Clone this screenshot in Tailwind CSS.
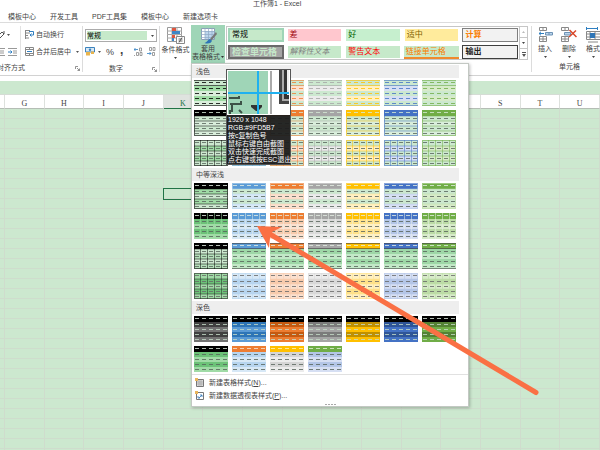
<!DOCTYPE html>
<html lang="zh-CN">
<head>
  <meta charset="UTF-8" />
  <meta name="viewport" content="width=device-width, initial-scale=1.0" />
  <title>工作簿1 - Excel</title>
  <script src="https://cdn.jsdelivr.net/npm/@tailwindcss/browser@4"></script>
</head>
<body class="relative h-screen overflow-hidden bg-white text-[#444] text-[7px] leading-[10px] font-['Liberation_Sans','Noto_Sans_CJK_SC',sans-serif]">

  <!-- Title and tabs -->
  <header class="h-[23px] flex flex-col border-b border-[#dcdcdc]">
    <h1 class="h-[12px] pl-[253px] leading-[8px]">工作簿1 - Excel</h1>
    <nav class="flex gap-[14px] pl-2">
      <a href="#">模板中心</a>
      <a href="#">开发工具</a>
      <a href="#">PDF工具集</a>
      <a href="#">模板中心</a>
      <a href="#">新建选项卡</a>
    </nav>
  </header>

  <!-- Ribbon -->
  <section class="h-[53px] flex border-b border-[#d2d2d2] py-[3px]">
    <div class="w-[83px] shrink-0 flex flex-col border-r border-[#dcdcdc]">
      <div class="flex h-[36px]">
        <div class="w-[21px] flex flex-col border-r border-[#e2e2e2]">
          <button class="h-[17px] flex items-center gap-[2px]" aria-label="方向">
            <svg class="w-[5px] h-[10px]" viewBox="0 0 5 10" fill="none" stroke="#555"><path d="M0 8L4 4L2 2L0 4M4 1V4" /></svg>
            <svg class="w-[3px] h-[2px]" viewBox="0 0 3 2"><path d="M0 0H3L1.5 2z" fill="#555" /></svg>
          </button>
          <button class="h-[17px] flex items-center gap-[3px]" aria-label="增加缩进量">
            <svg class="w-[5px] h-[8px]" viewBox="0 0 5 8" stroke="#999"><path d="M0 .5H5M0 3H4M0 5H4M0 7.5H5" /></svg>
            <svg class="w-[9px] h-[8px]" viewBox="0 0 9 8" stroke="#999" fill="none"><path d="M0 .5H9M5 3H9M5 5H9M0 7.5H9" /><path d="M0 4H4M2.5 2.5L4 4L2.5 5.5" stroke="#2f7fc1" /></svg>
          </button>
        </div>
        <div class="flex flex-col pl-1">
          <button class="h-[17px] flex items-center gap-[2px]">
            <svg class="w-[9px] h-[9px]" viewBox="0 0 9 9" fill="none" stroke="#888"><path d="M0 .5H5M0 3H5M0 5.5H3M0 8H4M.5 0V9" /><path d="M4 1.5H8.500V5H5M6.500 3.500L5 5L6.500 6.500" stroke="#2f7fc1" /></svg>
            自动换行
          </button>
          <button class="h-[17px] flex items-center gap-[2px]">
            <svg class="w-[9px] h-[9px]" viewBox="0 0 9 9" fill="none" stroke="#888"><path d="M.5 .5H8.500V8.500H.5zM0 2.500H9M0 6.500H9M4.500 0V2.500M4.500 6.500V9" /><path d="M2 4.500H7" stroke="#2f7fc1" /></svg>
            合并后居中
            <svg class="w-[3px] h-[2px] ml-[3px]" viewBox="0 0 3 2"><path d="M0 0H3L1.5 2z" fill="#555" /></svg>
          </button>
        </div>
      </div>
      <div class="flex justify-between items-center pr-[2px] pt-[3px]">
        <span class="-ml-[3px]">对齐方式</span>
        <svg class="w-[5px] h-[5px]" viewBox="0 0 5 5" fill="none" stroke="#777" stroke-width=".8"><path d="M.5 3V.5H3M2 2L4.500 4.500M4.500 2.500V4.500H2.500" /></svg>
      </div>
    </div>

    <div class="w-[77px] shrink-0 flex flex-col border-r border-[#dcdcdc] px-[2px]">
      <div class="h-[36px] pt-[3px]">
        <div class="relative h-[13px] border border-[#ababab] pr-[8px]">
          <select aria-label="数字格式" class="block w-full h-full appearance-none bg-[#c6e9ca] border border-white pl-0 text-[7px] leading-[9px] text-black">
            <option>常规</option>
          </select>
          <svg class="absolute right-[2px] top-[5px] w-[3px] h-[2px]" viewBox="0 0 3 2"><path d="M0 0H3L1.5 2z" fill="#444" /></svg>
        </div>
        <div class="flex items-center h-[19px]">
          <button class="flex items-center gap-[3px]" aria-label="会计数字格式">
            <svg class="w-[10px] h-[9px]" viewBox="0 0 10 9"><path d="M.5 .5H9.500V5H.5z" fill="#d9e8f5" stroke="#3b83bd" /><circle cx="5" cy="2.800" r="1.200" fill="#3b83bd" /><path d="M1 5H5V8.500H1zM6 4.500H9V7H6z" fill="#e9b44c" /></svg>
            <svg class="w-[3px] h-[2px]" viewBox="0 0 3 2"><path d="M0 0H3L1.5 2z" fill="#555" /></svg>
          </button>
          <button class="ml-[5px] text-[9px]">%</button>
          <button class="ml-[6px] pb-1 text-[12px] font-bold">,</button>
          <button class="ml-[11px]" aria-label="增加小数位数">
            <svg class="w-[9px] h-[9px]" viewBox="0 0 9 9" fill="none" stroke="#888" stroke-width=".8"><path d="M0 2.500H4M1.500 1L0 2.500L1.500 4" stroke="#2f7fc1" /><path d="M5.500 1H7.500V4H5.500zM2.500 5.500H4.500V8.500H2.500zM6 5.500H8V8.500H6zM.5 8V9" /></svg>
          </button>
          <button class="ml-[4px]" aria-label="减少小数位数">
            <svg class="w-[9px] h-[9px]" viewBox="0 0 9 9" fill="none" stroke="#888" stroke-width=".8"><path d="M0 6.500H4M2.500 5L4 6.500L2.500 8" stroke="#2f7fc1" /><path d="M2.500 .5H4.500V3.500H2.500zM6 .5H8V3.500H6zM5.500 5.500H7.500V8.500H5.500z" /></svg>
          </button>
        </div>
      </div>
      <div class="flex justify-end items-center pt-[3px]">
        <span class="mr-[29px]">数字</span>
        <svg class="w-[5px] h-[5px]" viewBox="0 0 5 5" fill="none" stroke="#777" stroke-width=".8"><path d="M.5 3V.5H3M2 2L4.500 4.500M4.500 2.500V4.500H2.500" /></svg>
      </div>
    </div>

    <div class="w-[372px] shrink-0 flex border-r border-[#dcdcdc]">
      <button class="w-[31px] h-[36px] shrink-0 flex flex-col items-center pt-[1px] whitespace-nowrap">
        <svg class="w-[18px] h-[17px] shrink-0" viewBox="0 0 18 17"><path d="M.5 .5H14.500V14.500H.5z" fill="#fff" stroke="#999" /><path d="M5 0V15M10 0V15M0 4H15M0 7.500H15M0 11H15" stroke="#aaa" fill="none" /><path d="M5 1H9V4H5zM5 8H8V11H5z" fill="#e0563f" /><path d="M5 4H13V7H5zM5 11H7V14H5z" fill="#3f86c6" /><path d="M9.500 9.500H17.500V16.500H9.500z" fill="#fff" stroke="#888" /><path d="M11.500 12H15.500M11.500 14H15.500M15 10.500L12 15.500" stroke="#444" fill="none" stroke-width=".8" /></svg>
        <span class="leading-[12px]">条件格式</span>
        <svg class="w-[3px] h-[2px] shrink-0 mt-[1px]" viewBox="0 0 3 2"><path d="M0 0H3L1.5 2z" fill="#444" /></svg>
      </button>
      <button class="w-[34px] h-[38px] shrink-0 -mt-[1px] bg-[#9fd5b7] flex flex-col items-center pt-[3px] whitespace-nowrap leading-[8px]">
        <svg class="w-[17px] h-[17px] shrink-0" viewBox="0 0 17 17"><path d="M1.500 .5H14.500V11.500H1.500z" fill="#fff" stroke="#8d9fb5" /><path d="M5 3H14V11H5z" fill="#bcd5ec" /><path d="M1 3.500H15M1 6.500H15M1 9.500H15M5 0V12M8.500 0V12M12 0V12" stroke="#8fa9c6" stroke-width=".7" fill="none" /><path d="M16 4L10 11L11.500 12.500L17 6z" fill="#777" /><path d="M10 11C8 11 7.500 14 4.500 15C8 16.500 12 15 11.800 12.500z" fill="#2e75b6" /></svg>
        <span>套用</span>
        <span class="flex items-center gap-[1px]">表格格式
          <svg class="w-[3px] h-[2px]" viewBox="0 0 3 2"><path d="M0 0H3L1.5 2z" fill="#333" /></svg>
        </span>
      </button>
      <div class="ml-[1px] flex w-[302px] h-[34px] border border-[#c6c6c6]">
        <div class="grid grid-cols-5 gap-x-[3px] gap-y-[3px] w-[292px] shrink-0 p-[1px] text-[8px] leading-[10px] *:text-left *:whitespace-nowrap *:pl-[2px] *:h-[14px] *:overflow-hidden">
          <button class="bg-[#c6e9ca] border-2 border-[#9fd5b7] text-black">常规</button>
          <button class="bg-[#ffc7ce] border border-white text-[#9c0006]">差</button>
          <button class="bg-[#c6efce] border border-white text-[#006100]">好</button>
          <button class="bg-[#ffeb9c] border border-white text-[#7f6000]">适中</button>
          <button class="bg-[#f2f2f2] border border-[#7f7f7f] text-[#fa7d00] font-bold">计算</button>
          <button class="bg-[#a5a5a5] border-2 border-[#6a6a6a] text-[#c6e9ca] text-[9px] font-bold">检查单元格</button>
          <button class="bg-[#c6e9ca] border border-white text-[#7f7f7f] italic">解释性文本</button>
          <button class="bg-[#c6e9ca] border border-white text-[#ff0000]">警告文本</button>
          <button class="bg-[#c6e9ca] border-t border-t-white border-b-2 border-b-[#f08a2c] text-[#fa7d00]">链接单元格</button>
          <button class="bg-[#f2f2f2] border border-[#3f3f3f] text-[#222] font-bold">输出</button>
        </div>
        <div class="flex-1 flex flex-col border-l border-[#c6c6c6] divide-y divide-[#c6c6c6]">
          <button class="flex-1 flex items-center justify-center" aria-label="上一行"><svg class="w-[3px] h-[2px]" viewBox="0 0 3 2"><path d="M0 2H3L1.5 0z" fill="#bbb" /></svg></button>
          <button class="flex-1 flex items-center justify-center" aria-label="下一行"><svg class="w-[3px] h-[2px]" viewBox="0 0 3 2"><path d="M0 0H3L1.5 2z" fill="#444" /></svg></button>
          <button class="flex-1 flex items-center justify-center" aria-label="其他"><svg class="w-[4px] h-[5px]" viewBox="0 0 4 5"><path d="M0 0H4V1H0zM0 2H4L2 5z" fill="#555" /></svg></button>
        </div>
      </div>
    </div>

    <div class="w-[76px] shrink-0 flex flex-col">
      <div class="flex h-[36px] gap-[8px] pl-[5px] pt-[1px] *:flex *:flex-col *:items-center *:whitespace-nowrap *:w-[16px] *:shrink-0">
        <button>
          <svg class="w-[15px] h-[16px] shrink-0" viewBox="0 0 15 16" fill="none" stroke="#888"><path d="M1.500 .5H8.500V3.500H1.500zM5 0V4M1.500 9.500H8.500V14.500H1.500zM5 9V15M1 12H9" /><path d="M7.500 5.500H14.500V8H7.500zM11 5V8" fill="#bcd5ec" stroke="#6d92b5" /><path d="M1 6.500H6M3 4.800L1 6.500L3 8.300" stroke="#2f7fc1" /></svg>
          <span class="leading-[12px]">插入</span>
          <svg class="w-[3px] h-[2px] shrink-0 mt-[1px]" viewBox="0 0 3 2"><path d="M0 0H3L1.5 2z" fill="#444" /></svg>
        </button>
        <button>
          <svg class="w-[16px] h-[16px] shrink-0" viewBox="0 0 16 16" fill="none" stroke="#888"><path d="M.5 .5H7.500V3.500H.5zM4 0V4M.5 9.500H7.500V14.500H.5zM4 9V15M0 12H8" /><path d="M3.500 5.500H9.500V8H3.500z" fill="#bcd5ec" stroke="#6d92b5" /><path d="M8.500 3L15.500 10M15 3.500L8 10" stroke="#d9482b" stroke-width="1.500" /></svg>
          <span class="leading-[12px]">删除</span>
          <svg class="w-[3px] h-[2px] shrink-0 mt-[1px]" viewBox="0 0 3 2"><path d="M0 0H3L1.5 2z" fill="#444" /></svg>
        </button>
        <button>
          <svg class="w-[16px] h-[16px] shrink-0" viewBox="0 0 16 16" fill="none" stroke="#888"><path d="M1 1.500H13M1.500 0V3M12.500 0V3" stroke="#2f7fc1" /><path d="M1.500 4.500H15.500V12.500H1.500zM1 7H16M1 10H16M5 4V13M10 4V13M3 15H13" /><path d="M5 6H10V11H5z" fill="#2e75b6" stroke="none" /></svg>
          <span class="leading-[12px]">格式</span>
          <svg class="w-[3px] h-[2px] shrink-0 mt-[1px]" viewBox="0 0 3 2"><path d="M0 0H3L1.5 2z" fill="#444" /></svg>
        </button>
      </div>
      <span class="pt-[3px] pl-[27px]">单元格</span>
    </div>
  </section>

  <!-- Formula bar -->
  <div class="mt-[5px] h-[14px] bg-[#cce8cf] border-b border-[#d5dcd5]"></div>

  <!-- Sheet -->
  <table class="w-full table-fixed border-separate border-spacing-0 font-['Liberation_Serif',serif]">
    <colgroup id="cols"></colgroup>
    <thead><tr id="letters"></tr></thead>
    <tbody id="cells" class="bg-[#cce8cf]"></tbody>
  </table>

  <!-- Table style menu -->
  <div class="absolute left-[191px] top-[63px] w-[278px] bg-white border border-[#c3c8c3] shadow-[1px_1px_3px_rgba(0,0,0,0.25)]">
    <div id="styles" class="pt-[1px]"></div>
    <div class="border-t border-[#e1e1e1] pt-[1px] pl-[3px] flex flex-col items-start">
      <button class="h-[13px] flex items-center gap-[5px]">
        <svg class="w-[9px] h-[9px]" viewBox="0 0 9 9"><path d="M1.500 1.500H8.500V8.500H1.500z" fill="#ddd" stroke="#777" /><path d="M2 4H8M2 6H8M4 2V8M6 2V8" stroke="#999" stroke-width=".6" /><path d="M0 0H3V3H0z" fill="#eab65c" /></svg>
        <span>新建表格样式(<u>N</u>)...</span>
      </button>
      <button class="h-[13px] flex items-center gap-[5px]">
        <svg class="w-[9px] h-[9px]" viewBox="0 0 9 9" fill="none"><path d="M1.500 1.500H8.500V8.500H1.500z" fill="#fff" stroke="#777" /><path d="M4 7L7 4M7 6V4H5M3 5V7H5" stroke="#2e75b6" stroke-width=".8" /><path d="M0 0H3V3H0z" fill="#eab65c" /></svg>
        <span>新建数据透视表样式(<u>P</u>)...</span>
      </button>
    </div>
    <div class="h-[4px] flex justify-center items-center gap-[1px] *:w-[2px] *:h-[1px] *:bg-[#aaa]"><i></i><i></i><i></i><i></i></div>
  </div>

  <!-- Colour picker tooltip -->
  <div class="absolute left-[226px] top-[69px] w-[65px] h-[96px] border border-[#555] bg-[#1c1c1c]/95 text-white whitespace-nowrap">
    <svg class="block w-full h-[45px]" viewBox="0 0 63 45" preserveAspectRatio="none">
      <path d="M0 0H63V45H0z" fill="#fff" />
      <path d="M1 1H41V44H1z" fill="#9fd5b7" />
      <path d="M43 1H45V44H43z" fill="#aaa" />
      <path d="M52 0H62V34H52z" fill="#444" /><path d="M55 0H62V31H55z" fill="#aaa" /><path d="M57 0H62V29H57z" fill="#333" /><path d="M60 0H62V25H60z" fill="#eee" />
      <path d="M2 28H12V26M3 34H14V31M5 35V41H3V44M12 40L15 43" fill="none" stroke="#3c5247" stroke-width="2" />
      <path d="M24 35H35V37L31 41H29L24 37z" fill="#333" />
      <path d="M30 1H32V44H30zM1 22H62V24H1z" fill="#1fb1f0" />
    </svg>
    <div class="pl-[1px] pt-[1px] leading-[8px]">
      <p>1920 x 1048</p>
      <p>RGB:#9FD5B7</p>
      <p>按c复制色号</p>
      <p>鼠标右键自由截图</p>
      <p>双击快速完成截图</p>
      <p>点右键或按ESC退出</p>
    </div>
  </div>

  <!-- Arrow -->
  <svg class="absolute left-[254px] top-[222px] w-[288px] h-[176px]" viewBox="254 222 288 176" fill="#fa7044">
    <path d="M257 226L282 227L272 232L270 238L269 248z" />
    <path d="M268 233L536 392.500" stroke="#fa7044" stroke-width="5" stroke-linecap="round" />
  </svg>

  <script>
    const columns = ["", "G", "H", "I", "J", "K", "L", "M", "N", "O", "P", "Q", "R", "S", "T", "U"];

    document.getElementById("cols").innerHTML = columns
      .map((c) => c ? "<col>" : '<col class="w-[5px]">').join("");

    document.getElementById("letters").innerHTML = columns.map((c) => {
      const state = c === "K" ? "bg-[#dfe3df] border-b-[#217346] text-[#217346]" : "border-b-[#b5bdb5]";
      return `<th class="h-[14px] p-0 pt-[5px] text-[8px] leading-[8px] font-normal border-b border-r border-r-[#dde1dd] ${state}">${c}</th>`;
    }).join("");

    let rows = "";
    for (let r = 1; r <= 35; r++) {
      rows += "<tr>" + columns.map((c) => {
        const active = c === "K" && r === 9;
        return `<td class="h-[10px] p-0 ${active ? "outline outline-[#217346]" : ""} border-b border-r border-[#cfdccd]"></td>`;
      }).join("") + "</tr>";
    }
    document.getElementById("cells").innerHTML = rows;

    // black, blue, orange, gray, gold, dark blue, green
    const accent = ["#000000", "#5b9bd5", "#ed7d31", "#a5a5a5", "#ffc000", "#4472c4", "#70ad47"];
    const tint = ["#a0dba6", "#d7e8f6", "#fbe0cf", "#ebebeb", "#fff0c2", "#d6dff3", "#d7ebc9"];
    const mid = ["#6cc278", "#b7d5ef", "#f8cbad", "#d9d9d9", "#ffe28a", "#b4c6e7", "#bcdca6"];
    const dark = ["#404040", "#2e75b6", "#c55a11", "#7b7b7b", "#bf9000", "#2f5597", "#548235"];
    const body = ["#737373", "#5b9bd5", "#ed7d31", "#a5a5a5", "#ffc000", "#4472c4", "#70ad47"];
    const paper = "#cce8cf";
    const ink = "#56635a";
    const each = (fn) => accent.map((a, i) => fn(a, i));

    const groups = [
      { name: "浅色", rows: [
        each((a, i) => ({ head: paper, odd: tint[i], even: i ? paper : "#d9eedb", ends: a, headDash: a, dash: a })),
        each((a) => ({ head: a, odd: paper, even: "#d9eedb", lines: a, frame: a, headDash: "#d5e8d5", dash: ink })),
        each((a, i) => ({ head: paper, odd: tint[i], even: paper, lines: a, frame: a, cols: a, headDash: ink, dash: ink })),
      ] },
      { name: "中等深浅", rows: [
        each((a, i) => ({ head: a, odd: i ? paper : "#a0dba6", even: i ? tint[i] : paper, lines: i ? mid[i] : a, frame: i ? mid[i] : a, headDash: "#e3eee3", dash: ink })),
        each((a, i) => ({ head: a, odd: mid[i], even: tint[i], cols: i ? "#e8f0e8" : "#a0dba6", headDash: "#e3eee3", dash: ink })),
        each((a, i) => i
          ? { head: a, odd: "#9ed7a7", even: "#c2e8c7", ends: "#444", headDash: "#e3eee3", dash: ink }
          : { head: a, odd: paper, even: "#b5dfba", lines: a, frame: a, cols: a, headDash: "#e3eee3", dash: ink }),
        each((a, i) => ({ head: i ? tint[i] : "#a0dba6", odd: mid[i], even: tint[i], frame: i ? mid[i] : "#222", lines: i ? mid[i] : "#222", cols: i ? mid[i] : "#222", headDash: "#666", dash: "#666" })),
      ] },
      { name: "深色", rows: [
        each((a, i) => ({ head: "#000", odd: dark[i], even: body[i], headDash: "#dfeadf", dash: "#c5dcc8" })),
        [
          { head: "#000", odd: "#6cc278", even: "#a0dba6", headDash: "#dfeadf", dash: ink },
          { head: accent[2], odd: mid[1], even: tint[1], headDash: "#f4e6d8", dash: ink },
          { head: accent[4], odd: "#d5d5d5", even: "#ececec", headDash: "#fff0c2", dash: ink },
          { head: accent[6], odd: mid[5], even: tint[5], headDash: "#e3f0d8", dash: ink },
        ],
      ] },
    ];

    function swatch(s) {
      let out = "";
      for (let r = 0; r < 5; r++) {
        const fill = r === 0 ? s.head : r % 2 ? s.odd : s.even;
        out += `<rect y="${r ? r * 5 + 1 : 0}" width="34" height="${r ? 5 : 6}" fill="${fill}"/>`;
      }
      if (s.lines) {
        for (let r = 1; r < 5; r++) out += `<rect y="${r * 5 + 0.5}" width="34" height="1" fill="${s.lines}" opacity=".5"/>`;
      }
      if (s.cols) {
        for (let c = 1; c < 5; c++) out += `<rect x="${c * 7 - 1}" width="1" height="26" fill="${s.cols}" opacity=".5"/>`;
      }
      for (let r = 0; r < 5; r++) {
        for (let c = 0; c < 5; c++) {
          out += `<rect x="${c * 7 + 1}" y="${r * 5 + (r ? 3 : 2)}" width="4" height="1" fill="${r ? s.dash : s.headDash}" opacity=".8"/>`;
        }
      }
      if (s.frame) out += `<rect x=".5" y=".5" width="33" height="25" fill="none" stroke="${s.frame}" opacity=".6"/>`;
      if (s.ends) out += `<path d="M0 .5H34M0 5.5H34M0 25.500H34" stroke="${s.ends}" opacity=".6"/>`;
      return `<svg class="block w-[34px] h-[26px]" viewBox="0 0 34 26">${out}</svg>`;
    }

    document.getElementById("styles").innerHTML = groups.map((g) => `
      <h2 class="mr-[9px] h-[13px] pl-1 leading-[13px] bg-[#eeeeee]">${g.name}</h2>
      <div class="flex flex-col gap-1 pl-[2px] py-[2px]">
        ${g.rows.map((row) => `<div class="flex gap-1">${row.map((s, i) =>
          `<button aria-label="${g.name} ${i + 1}">${swatch(s)}</button>`).join("")}</div>`).join("")}
      </div>`).join("");
  </script>
</body>
</html>
